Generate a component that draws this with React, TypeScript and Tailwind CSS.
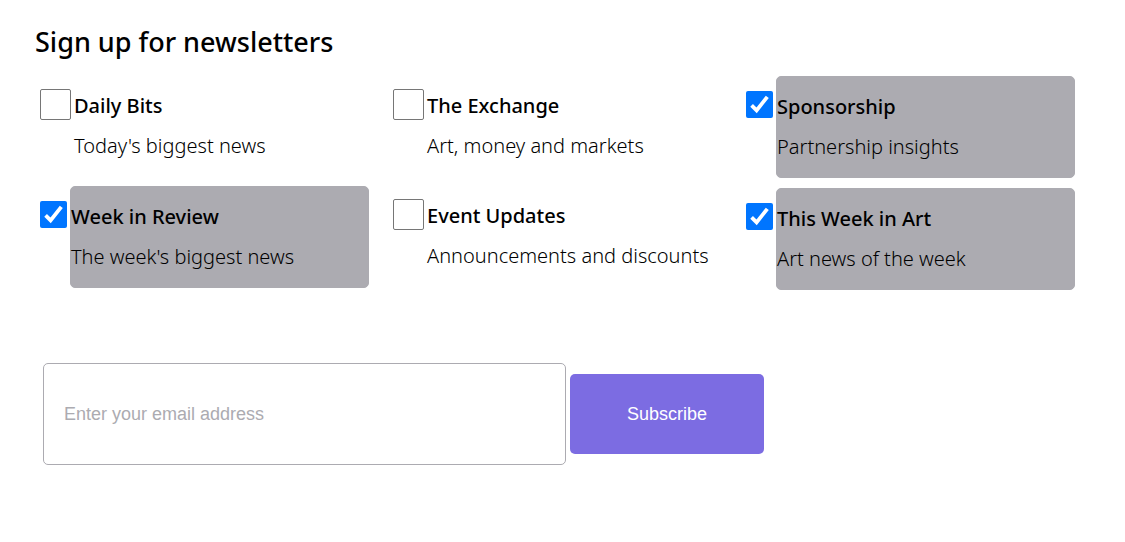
import { useState } from "react";

type Newsletter = {
  id: string;
  title: string;
  description: string;
  checked: boolean;
};

const columns: Newsletter[][] = [
  [
    { id: "daily-bits", title: "Daily Bits", description: "Today's biggest news", checked: false },
    { id: "week-in-review", title: "Week in Review", description: "The week's biggest news", checked: true },
  ],
  [
    { id: "the-exchange", title: "The Exchange", description: "Art, money and markets", checked: false },
    { id: "event-updates", title: "Event Updates", description: "Announcements and discounts", checked: false },
  ],
  [
    { id: "sponsorship", title: "Sponsorship", description: "Partnership insights", checked: true },
    { id: "this-week-in-art", title: "This Week in Art", description: "Art news of the week", checked: true },
  ],
];

function NewsletterOption({ item }: { item: Newsletter }) {
  const [checked, setChecked] = useState(item.checked);

  return (
    <div className="flex items-start gap-[3px]">
      <div className={checked ? "mt-[15px] grid shrink-0" : "mt-[13px] grid shrink-0"}>
        <input
          id={item.id}
          type="checkbox"
          checked={checked}
          onChange={(event) => setChecked(event.target.checked)}
          className="col-start-1 row-start-1 size-[31px] appearance-none rounded-[2px] border border-[#767676] bg-white checked:size-[27px] checked:border-0 checked:bg-[#0075ff]"
        />
        {checked && (
          <svg
            viewBox="0 0 27 27"
            aria-hidden="true"
            className="pointer-events-none col-start-1 row-start-1 size-[27px]"
          >
            <path d="M5.6 14.4 L10.6 19.4 L21.3 5.8" fill="none" stroke="white" strokeWidth="3.8" />
          </svg>
        )}
      </div>
      <label
        htmlFor={item.id}
        className={
          checked
            ? "w-full max-w-[299px] rounded-[5px] border border-[#acabb1] bg-[#acabb1] py-2.5"
            : "w-full max-w-[299px] py-2.5"
        }
      >
        <span className="block font-medium">{item.title}</span>
        <span className="block font-[350]">{item.description}</span>
      </label>
    </div>
  );
}

export default function App() {
  return (
    <main className="bg-white pt-5 pr-[26px] pb-10 pl-[35px] font-['Noto_Sans',sans-serif] text-[20px] leading-10 text-black">
      <h1 className="text-[27px] leading-[44px] font-medium">Sign up for newsletters</h1>
      <form onSubmit={(event) => event.preventDefault()}>
        <div className="grid grid-cols-3 pt-3 pl-[5px]">
          {columns.map((column) => (
            <div key={column[0].id} className="flex flex-col gap-2.5">
              {column.map((item) => (
                <NewsletterOption key={item.id} item={item} />
              ))}
            </div>
          ))}
        </div>
        <div className="mt-[73px] flex items-center gap-1 pl-2 font-['Liberation_Sans',Arial,sans-serif] text-[18px] leading-5">
          <input
            type="email"
            aria-label="Email address"
            placeholder="Enter your email address"
            className="w-full max-w-[523px] rounded-[5px] border border-[#acabb1] px-5 py-10 placeholder:text-[#acabb1] placeholder:opacity-100"
          />
          <button type="submit" className="w-[194px] shrink-0 rounded-[5px] bg-[#7c6ce2] py-[30px] text-white">
            Subscribe
          </button>
        </div>
      </form>
    </main>
  );
}
